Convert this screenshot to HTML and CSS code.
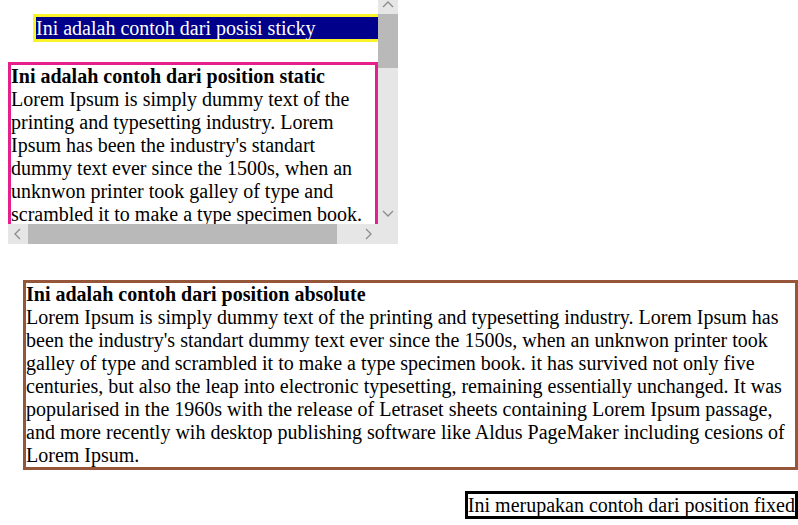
FILE: index.html
```
<!DOCTYPE html>
<html lang="id">
<head>
<meta charset="utf-8">
<title>Position</title>
<link rel="stylesheet" href="styles.css">
</head>
<body>
<section class="scroller">
  <div class="viewport">
    <div class="sticky">Ini adalah contoh dari posisi sticky</div>
    <div class="static"><b>Ini adalah contoh dari position static</b><br>Lorem Ipsum is simply dummy text of the printing and typesetting industry. Lorem Ipsum has been the industry's standart dummy text ever since the 1500s, when an unknwon printer took galley of type and scrambled it to make a type specimen book.</div>
  </div>
  <div class="bar bar-vertical">
    <svg class="arrow-up" viewBox="0 0 20 14"><path d="M5 7 10 2 15 7"/></svg>
    <div class="thumb"></div>
    <svg class="arrow-down" viewBox="0 0 20 20"><path d="M5 7 10 12 15 7"/></svg>
  </div>
  <div class="bar bar-horizontal">
    <svg class="arrow-side" viewBox="0 0 20 20"><path d="M12 5 7 10 12 15"/></svg>
    <div class="thumb"></div>
    <svg class="arrow-side" viewBox="0 0 20 20"><path d="M8 5 13 10 8 15"/></svg>
  </div>
</section>
<div class="absolute"><b>Ini adalah contoh dari position absolute</b><br>Lorem Ipsum is simply dummy text of the printing and typesetting industry. Lorem Ipsum has been the industry's standart dummy text ever since the 1500s, when an unknwon printer took galley of type and scrambled it to make a type specimen book. it has survived not only five centuries, but also the leap into electronic typesetting, remaining essentially unchanged. It was popularised in the 1960s with the release of Letraset sheets containing Lorem Ipsum passage, and more recently wih desktop publishing software like Aldus PageMaker including cesions of Lorem Ipsum.</div>
<div class="fixed">Ini merupakan contoh dari position fixed</div>
</body>
</html>
```
FILE: styles.css
```
body {
  margin: 0;
  background: #fff;
  color: #000;
  font: 20px/23px "Liberation Serif", "Times New Roman", serif;
}

.scroller {
  display: grid;
  grid-template-columns: 1fr 20px;
  grid-template-rows: 224px 20px;
  width: 390px;
  margin-left: 8px;
}

.viewport {
  overflow: hidden;
}

.sticky {
  width: 100%;
  margin: 14px 0 20px 25px;
  border: 3px solid #fbf32a;
  background: #00008b;
  color: #fff;
  line-height: 22px;
}

.static {
  border: 3px solid #e5208c;
}

.bar {
  display: flex;
  background: #e6e6e6;
}

.bar-vertical {
  flex-direction: column;
}

.bar-horizontal {
  grid-column: 1 / -1;
  padding-right: 20px;
}

.bar svg {
  flex: none;
  width: 20px;
  height: 20px;
  fill: none;
  stroke: #8c8c8c;
  stroke-width: 1.3;
}

.bar .arrow-up {
  height: 14px;
}

.bar .arrow-down {
  margin-top: auto;
}

.thumb {
  background: #b9b9b9;
}

.bar-vertical .thumb {
  height: 54px;
}

.bar-horizontal .thumb {
  width: 309px;
  margin-right: auto;
}

.absolute {
  margin: 36px 0 0 23px;
  border: 3px solid #96563a;
}

.fixed {
  width: max-content;
  margin: 21px 0 0 auto;
  border: 3px solid #000;
  line-height: 22px;
}
```
